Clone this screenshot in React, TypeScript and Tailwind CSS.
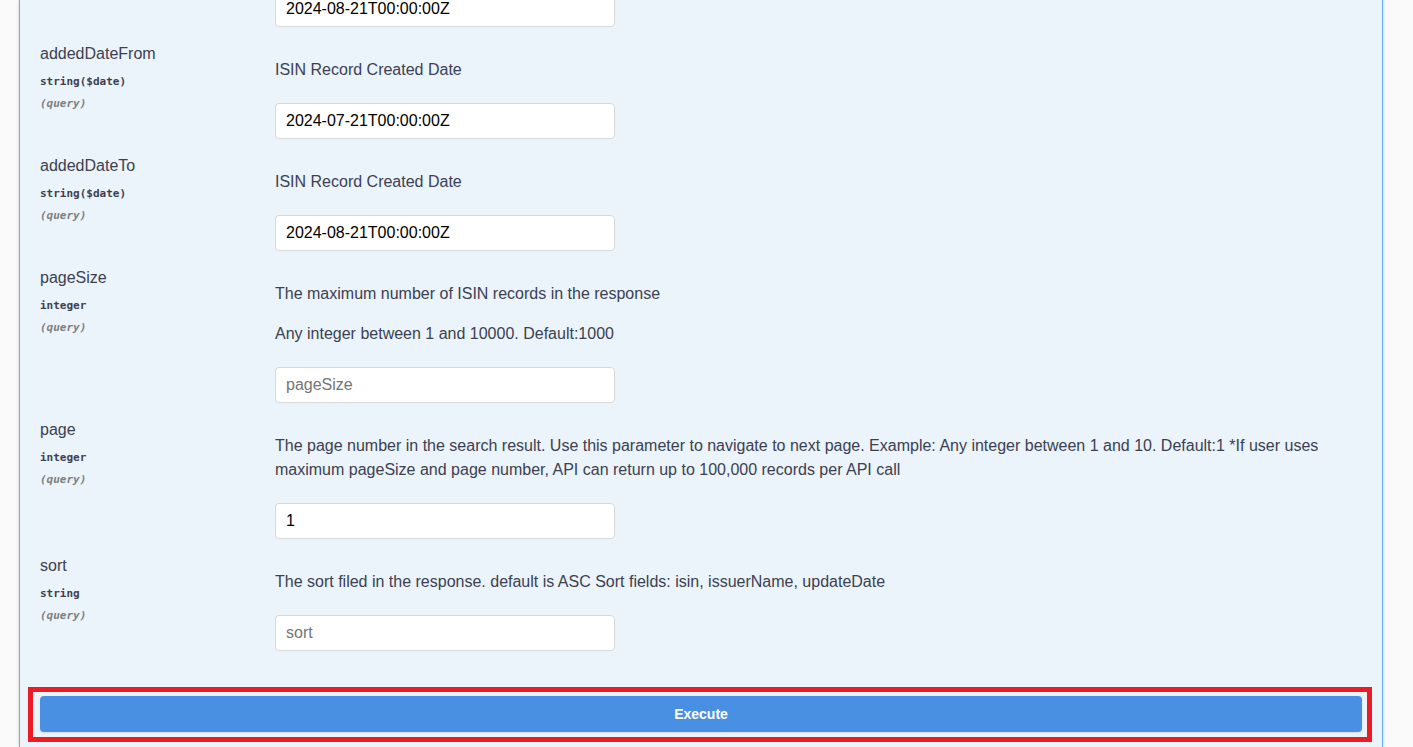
import React from "react";

type Param = {
  name: string;
  type: string;
  desc: string[];
  value?: string;
  placeholder: string;
};

const params: Param[] = [
  {
    name: "addedDateFrom",
    type: "string($date)",
    desc: ["ISIN Record Created Date"],
    value: "2024-07-21T00:00:00Z",
    placeholder: "addedDateFrom",
  },
  {
    name: "addedDateTo",
    type: "string($date)",
    desc: ["ISIN Record Created Date"],
    value: "2024-08-21T00:00:00Z",
    placeholder: "addedDateTo",
  },
  {
    name: "pageSize",
    type: "integer",
    desc: [
      "The maximum number of ISIN records in the response",
      "Any integer between 1 and 10000. Default:1000",
    ],
    placeholder: "pageSize",
  },
  {
    name: "page",
    type: "integer",
    desc: [
      "The page number in the search result. Use this parameter to navigate to next page. Example: Any integer between 1 and 10. Default:1 *If user uses maximum pageSize and page number, API can return up to 100,000 records per API call",
    ],
    value: "1",
    placeholder: "page",
  },
  {
    name: "sort",
    type: "string",
    desc: ["The sort filed in the response. default is ASC Sort fields: isin, issuerName, updateDate"],
    placeholder: "sort",
  },
];

function ParamInput({ value, placeholder }: { value?: string; placeholder: string }) {
  return (
    <input
      type="text"
      defaultValue={value}
      placeholder={placeholder}
      className="block h-[36px] w-[340px] rounded-[4px] border border-[#d9d9d9] bg-white px-[10px] text-[16px] text-black outline-none placeholder:text-[#757575]"
    />
  );
}

function ParamRow({ p }: { p: Param }) {
  return (
    <div className="flex pt-[14px]">
      <div className="w-[235px] shrink-0 pt-[1px] text-[#3b4151]">
        <div className="text-[16px] leading-[24px]">{p.name}</div>
        <div className="mt-[7px] font-['DejaVu_Sans_Mono',monospace] text-[11px] font-bold leading-[18px]">
          {p.type}
        </div>
        <div className="mt-[4px] font-['DejaVu_Sans_Mono',monospace] text-[11px] font-bold italic leading-[18px] text-[#808080]">
          (query)
        </div>
      </div>
      <div className="min-w-0 flex-1">
        <div className="mt-[17px] flex flex-col gap-[16px] text-[16px] leading-[24px] text-[#3b4151]">
          {p.desc.map((d, i) => (
            <p key={i}>{d}</p>
          ))}
        </div>
        <div className="mt-[21px]">
          <ParamInput value={p.value} placeholder={p.placeholder} />
        </div>
      </div>
    </div>
  );
}

export default function App() {
  return (
    <div className="h-[747px] w-[1413px] overflow-hidden bg-[#fafafa] font-['Liberation_Sans',Arial,sans-serif]">
      <div className="ml-[19px] h-full w-[1364px] overflow-hidden border-x border-[#61affe] bg-[#ebf3fb] shadow-[0_0_3px_rgba(0,0,0,0.19)]">
        <div className="px-[20px]">
          {/* tail of the previous parameter row */}
          <div className="-mt-[9px] flex">
            <div className="w-[235px] shrink-0" />
            <ParamInput value="2024-08-21T00:00:00Z" placeholder="updatedDateTo" />
          </div>
          {params.map((p) => (
            <ParamRow key={p.name} p={p} />
          ))}
        </div>
        <div className="ml-[8px] mr-[10px] mt-[36px] border-[5px] border-[#ed1c24] pb-[5px] pl-[7px] pr-[5px] pt-[4px]">
          <button
            type="button"
            className="block h-[36px] w-full rounded-[4px] bg-[#4990e2] text-[14px] font-bold text-white shadow-[0_1px_2px_rgba(0,0,0,0.1)]"
          >
            Execute
          </button>
        </div>
      </div>
    </div>
  );
}
